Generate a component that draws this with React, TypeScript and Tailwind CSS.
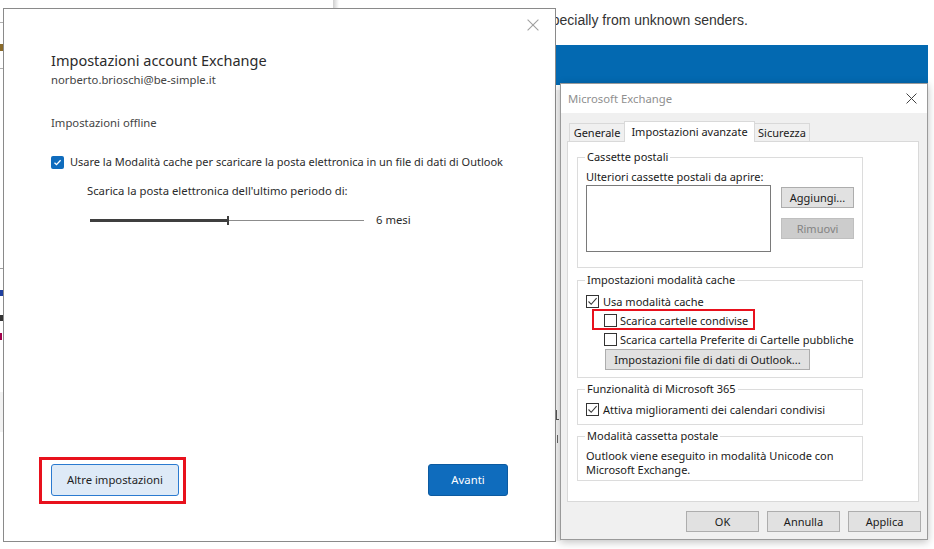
import React from 'react';

// --- SMALL PIECES ---
function WinCheck({ checked }: { checked?: boolean }) {
  return (
    <span className="w-[13px] h-[13px] border border-[#333333] bg-white flex items-center justify-center shrink-0">
      {checked && (
        <svg width="11" height="11" viewBox="0 0 11 11">
          <path d="M1.5 5.5 L4.2 8.3 L9.6 2.2" fill="none" stroke="#3a3a3a" strokeWidth="1.1" />
        </svg>
      )}
    </span>
  );
}

function WinButton({ children, disabled, className = '' }: any) {
  return (
    <div
      className={`h-[21px] flex items-center justify-center border whitespace-nowrap ${
        disabled ? 'bg-[#cccccc] border-[#bfbfbf] text-[#838383]' : 'bg-[#e1e1e1] border-[#adadad] text-[#1a1a1a]'
      } ${className}`}
    >
      {children}
    </div>
  );
}

function GroupBox({ title, children, className = '' }: any) {
  return (
    <fieldset className={`border border-[#dcdcdc] w-[286px] ${className}`}>
      <legend className="ml-[7px] px-[2px] leading-[16px]">{title}</legend>
      {children}
    </fieldset>
  );
}

function CloseX({ size, color, width }: { size: number; color: string; width: number }) {
  return (
    <svg width={size} height={size} viewBox="0 0 10 10">
      <path d="M0.5 0.5 L9.5 9.5 M9.5 0.5 L0.5 9.5" stroke={color} strokeWidth={width} fill="none" />
    </svg>
  );
}

export default function App() {
  return (
    <div className="relative w-[934px] h-[549px] overflow-hidden bg-white font-['Noto_Sans',sans-serif] whitespace-nowrap">
      {/* --- BACKGROUND WINDOWS --- */}
      <div className="absolute left-[333px] top-0 w-[6px] h-[9px] bg-gradient-to-r from-[#cfcfcf] to-white" />
      <div className="absolute left-0 top-[22px] w-[4px] h-px bg-[#b0b0b0]" />
      <div className="absolute left-0 top-[68px] w-[4px] h-px bg-[#b0b0b0]" />
      <div className="absolute left-0 top-[44px] w-[3px] h-[7px] bg-[#8a6a2a]" />
      <div className="absolute left-0 top-[268px] w-[4px] h-px bg-[#a0a0a0]" />
      <div className="absolute left-0 top-[290px] w-[3px] h-[6px] bg-[#1f3f9f]" />
      <div className="absolute left-0 top-[315px] w-[3px] h-[6px] bg-[#333333]" />
      <div className="absolute left-0 top-[333px] w-[2px] h-[7px] bg-[#a0004a]" />
      <div className="absolute left-0 top-[392px] w-[4px] h-[40px] bg-[#f2f2f2]" />

      <div className="absolute left-[537px] top-[10px] font-['Liberation_Sans',sans-serif] text-[14px] leading-[20px] text-[#333333]">
        especially from unknown senders.
      </div>
      <div className="absolute left-[555px] top-[45px] w-[373px] h-[40px] bg-[#0369b1]" />
      <div className="absolute left-[555px] top-[90px] w-[6px] h-[451px] bg-[#f3f3f3]" />
      <div className="absolute left-[556px] top-[410px] w-px h-[10px] bg-[#555]" />
      <div className="absolute left-[556px] top-[419px] w-[3px] h-px bg-[#555]" />
      <div className="absolute left-[557px] top-[435px] w-px h-[8px] bg-[#666]" />

      {/* --- LEFT DIALOG: ACCOUNT EXCHANGE --- */}
      <div className="absolute left-[3px] top-[8px] w-[553px] h-[534px] border border-[#8a8a8a] bg-white flex flex-col z-10">
        <div className="absolute left-[523px] top-[10px]">
          <CloseX size={12} color="#a0a0a0" width={0.9} />
        </div>

        <div className="flex-1 flex flex-col pl-[47px] pr-[47px] pt-[41px] pb-[45px] text-[11.3px]">
          <div className="text-[14.5px] leading-[21px] text-[#2b2b2b]">Impostazioni account Exchange</div>
          <div className="mt-px leading-[16px] text-[#444444]">norberto.brioschi@be-simple.it</div>
          <div className="mt-[26px] leading-[18px] text-[#444444]">Impostazioni offline</div>

          <div className="mt-[22px] flex items-center gap-[6px] h-[16px]">
            <span className="w-[13px] h-[13px] rounded-[2px] bg-[#0f6cbd] flex items-center justify-center shrink-0">
              <svg width="9" height="9" viewBox="0 0 9 9">
                <path d="M1.5 4.8 L3.5 6.7 L7.6 2.3" fill="none" stroke="white" strokeWidth="1.3" />
              </svg>
            </span>
            <span className="text-[11px] leading-[16px] text-[#2b2b2b]">
              Usare la Modalità cache per scaricare la posta elettronica in un file di dati di Outlook
            </span>
          </div>

          <div className="mt-[13px] ml-[36px] leading-[16px] text-[#2b2b2b]">
            Scarica la posta elettronica dell'ultimo periodo di:
          </div>

          <div className="mt-[13px] ml-[39px] flex items-center h-[16px]">
            <div className="w-[137px] h-[3px] bg-[#3f3f3f]" />
            <div className="w-[2px] h-[9px] bg-[#3f3f3f]" />
            <div className="w-[135px] h-px bg-[#8c8c8c]" />
            <span className="ml-[12px] leading-[16px] text-[#2b2b2b]">6 mesi</span>
          </div>

          <div className="flex-1" />

          <div className="flex items-center justify-between">
            <div className="relative">
              <div className="absolute left-[-12px] top-[-7px] w-[147px] h-[47px] border-[3px] border-[#e8111d]" />
              <div className="w-[128px] h-[32px] rounded-[3px] border border-[#2a7ad0] bg-[#deeaf7] flex items-center justify-center text-[#1f1f1f]">
                Altre impostazioni
              </div>
            </div>
            <div className="w-[80px] h-[32px] rounded-[3px] bg-[#0f6cbd] border border-[#0c5aa0] flex items-center justify-center text-white">
              Avanti
            </div>
          </div>
        </div>
      </div>

      {/* --- RIGHT DIALOG: MICROSOFT EXCHANGE --- */}
      <div className="absolute left-[560px] top-[83px] w-[368px] border border-[#9a9a9a] bg-[#f0f0f0] flex flex-col z-20 shadow-[0_2px_8px_rgba(0,0,0,0.25)] text-[11px] leading-[16px] text-[#1a1a1a]">
        <div className="h-[29px] bg-white flex items-center justify-between pl-[7px] pr-[10px]">
          <span className="text-[11.3px] text-[#8f8f8f]">Microsoft Exchange</span>
          <CloseX size={11} color="#404040" width={0.9} />
        </div>

        <div className="pt-[7px] pl-[6px] pr-[8px]">
          <div className="flex items-end h-[21px] pl-[2px]">
            <div className="w-[56px] h-[18px] border border-b-0 border-[#d9d9d9] flex items-center justify-center">Generale</div>
            <div className="relative top-px -ml-px w-[131px] h-[21px] border border-b-0 border-[#d9d9d9] bg-white flex items-center justify-center z-10">
              Impostazioni avanzate
            </div>
            <div className="-ml-px w-[56px] h-[18px] border border-b-0 border-[#d9d9d9] flex items-center justify-center">Sicurezza</div>
          </div>

          <div className="h-[361px] bg-white border border-[#d9d9d9] pl-[9px] pt-[7px] flex flex-col">
            <GroupBox title="Cassette postali">
              <div className="pl-[8px] pt-[4px] pb-[15px]">
                <div>Ulteriori cassette postali da aprire:</div>
                <div className="flex">
                  <div className="w-[185px] h-[67px] border border-[#7a7a7a] bg-white" />
                  <div className="ml-[10px] mt-[2px] flex flex-col gap-[10px]">
                    <WinButton className="w-[73px]">Aggiungi...</WinButton>
                    <WinButton className="w-[73px]" disabled>Rimuovi</WinButton>
                  </div>
                </div>
              </div>
            </GroupBox>

            <GroupBox title="Impostazioni modalità cache" className="mt-[4px]">
              <div className="pl-[8px] pt-[4px] pb-[7px]">
                <div className="h-[19px] flex items-center gap-[4px]">
                  <WinCheck checked />
                  <span>Usa modalità cache</span>
                </div>
                <div className="relative h-[19px] flex items-center gap-[3px] pl-[18px]">
                  <div className="absolute left-[6px] top-[-2px] w-[163px] h-[21px] border-2 border-[#e8111d]" />
                  <WinCheck />
                  <span>Scarica cartelle condivise</span>
                </div>
                <div className="h-[19px] flex items-center gap-[3px] pl-[18px]">
                  <WinCheck />
                  <span>Scarica cartella Preferite di Cartelle pubbliche</span>
                </div>
                <div className="pl-[19px]">
                  <WinButton className="w-[205px]">Impostazioni file di dati di Outlook...</WinButton>
                </div>
              </div>
            </GroupBox>

            <GroupBox title="Funzionalità di Microsoft 365" className="mt-[3px]">
              <div className="pl-[8px] pt-[3px] pb-[5px]">
                <div className="h-[19px] flex items-center gap-[4px]">
                  <WinCheck checked />
                  <span>Attiva miglioramenti dei calendari condivisi</span>
                </div>
              </div>
            </GroupBox>

            <GroupBox title="Modalità cassetta postale" className="mt-[3px]">
              <div className="pl-[8px] pt-[5px] pb-[3px] leading-[14px]">
                <div>Outlook viene eseguito in modalità Unicode con</div>
                <div>Microsoft Exchange.</div>
              </div>
            </GroupBox>
          </div>
        </div>

        <div className="flex justify-end gap-[8px] pt-[9px] pb-[7px] pr-[6px]">
          <WinButton className="w-[73px]">OK</WinButton>
          <WinButton className="w-[73px]">Annulla</WinButton>
          <WinButton className="w-[73px]">Applica</WinButton>
        </div>
      </div>
    </div>
  );
}
